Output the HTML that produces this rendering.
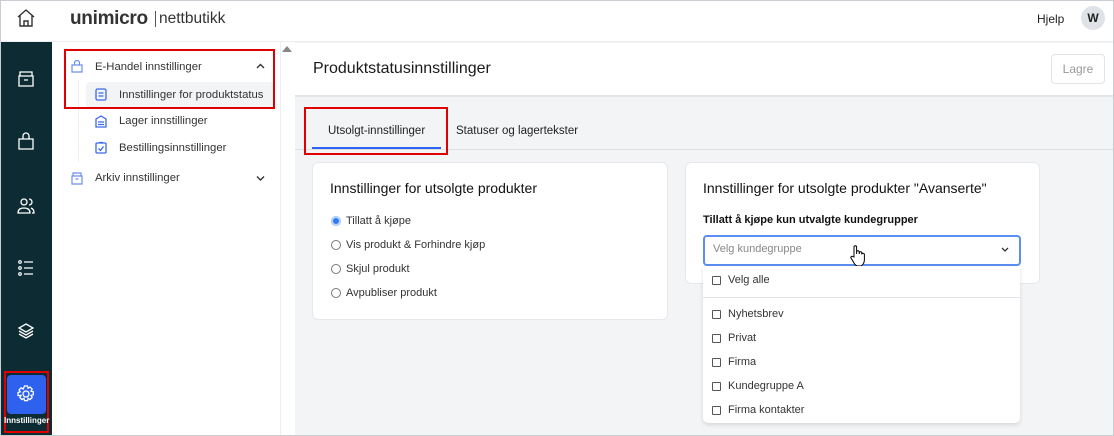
<!DOCTYPE html>
<html><head><meta charset="utf-8"><style>
*{box-sizing:border-box;margin:0;padding:0}
body{width:1114px;height:436px;overflow:hidden;font-family:"Liberation Sans",sans-serif;color:#1f2328;background:#fff;position:relative}
.frame{position:absolute;inset:0;border:1px solid #c9ccd1;pointer-events:none;z-index:50}
.abs{position:absolute}
.hdr{left:0;top:0;width:1114px;height:42px;background:#fff;border-bottom:1px solid #eceef1}
.side{left:1px;top:42px;width:51px;height:394px;background:#0d2b33}
.sub{left:52px;top:42px;width:242px;height:394px;background:#fff;border-right:1px solid #e5e7eb}
.main{left:295px;top:42px;width:818px;height:394px;background:#f3f4f6}
.tbar{left:295px;top:43px;width:818px;height:54px;background:#fff;border-bottom:2px solid #e2e4e8}
.t13{font-size:11.3px}
.card{background:#fff;border:1px solid #e6e8eb;border-radius:6px}
.radio{width:10px;height:10px;border:1px solid #777;border-radius:50%;display:inline-block}
.cb{width:9px;height:9px;border:1px solid #555;border-radius:1px}
.item{font-size:11px;color:#333}
svg{display:block}
</style></head><body>
<div class="abs hdr"></div>
<svg class="abs" style="left:16px;top:8px" width="20" height="20" viewBox="0 0 20 20" fill="none" stroke="#333" stroke-width="1.4"><path d="M2 9L10 2l8 7M4 7.5V18h12V7.5M8 18v-5h4v5"/></svg>
<div class="abs" style="left:70px;top:8px;font-size:19px;font-weight:bold;color:#333;letter-spacing:-0.3px">unimicro</div>
<div class="abs" style="left:155px;top:11px;width:1px;height:16px;background:#555"></div>
<div class="abs" style="left:159px;top:10px;font-size:15.5px;color:#333">nettbutikk</div>
<div class="abs" style="left:1037px;top:12px;font-size:12px;color:#222">Hjelp</div>
<div class="abs" style="left:1081px;top:6px;width:24px;height:24px;border-radius:50%;background:#dfe3e7;font-size:12px;font-weight:bold;text-align:center;line-height:24px;color:#222">W</div>

<div class="abs side"></div>
<svg class="abs" style="left:16px;top:69px" width="20" height="20" viewBox="0 0 20 20" fill="none" stroke="#fff" stroke-width="1.3"><path d="M4 3h12v4H4zM3 7h14v10H3zM8 11h4"/></svg>
<svg class="abs" style="left:16px;top:131px" width="20" height="20" viewBox="0 0 20 20" fill="none" stroke="#fff" stroke-width="1.3"><path d="M3 8h14v10H3zM7 8V5a3 3 0 0 1 6 0v3"/></svg>
<svg class="abs" style="left:16px;top:196px" width="20" height="20" viewBox="0 0 20 20" fill="none" stroke="#fff" stroke-width="1.3"><circle cx="8" cy="6" r="3"/><path d="M2 17c0-4 3-5 6-5s6 1 6 5zM13 3a3 3 0 0 1 0 6M15 12c2 1 3 2 3 5h-2"/></svg>
<svg class="abs" style="left:16px;top:258px" width="20" height="20" viewBox="0 0 20 20" fill="none" stroke="#fff" stroke-width="1.2"><circle cx="4" cy="4" r="1.3"/><circle cx="4" cy="10" r="1.3"/><circle cx="4" cy="16" r="1.3"/><path d="M8 4h9M8 10h9M8 16h9"/></svg>
<svg class="abs" style="left:16px;top:321px" width="20" height="20" viewBox="0 0 20 20" fill="none" stroke="#fff" stroke-width="1.3"><path d="M10 3l7 4-7 4-7-4zM3 10l7 4 7-4M3 13l7 4 7-4"/></svg>
<div class="abs" style="left:4px;top:371px;width:45px;height:62px;border:2px solid #e00000"></div>
<div class="abs" style="left:7px;top:375px;width:39px;height:39px;background:#2e62ee;border-radius:4px"></div>
<svg class="abs" style="left:16px;top:384px" width="20" height="20" viewBox="0 0 20 20" fill="none" stroke="#fff" stroke-width="1.3"><circle cx="10" cy="10" r="3"/><path d="M8.5 2h3l.6 2.3 2-1.2 2.1 2.1-1.2 2 2.3.6v3l-2.3.6 1.2 2-2.1 2.1-2-1.2-.6 2.3h-3l-.6-2.3-2 1.2-2.1-2.1 1.2-2L2 11.5v-3l2.3-.6-1.2-2 2.1-2.1 2 1.2z"/></svg>
<div class="abs" style="left:4px;top:416px;width:45px;text-align:center;font-size:8px;font-weight:bold;color:#fff">Innstillinger</div>

<div class="abs sub"></div>
<div class="abs" style="left:280px;top:42px;width:14px;height:394px;background:#fff;border-left:1px solid #eee"></div>
<div class="abs" style="left:282px;top:46px;width:0;height:0;border-left:5px solid transparent;border-right:5px solid transparent;border-bottom:6px solid #888"></div>
<div class="abs" style="left:78px;top:80px;width:1px;height:82px;background:#eee"></div>
<div class="abs" style="left:86px;top:82px;width:188px;height:26px;background:#f3f4f6;border-radius:4px"></div>
<div class="abs" style="left:64px;top:49px;width:211px;height:60px;border:2px solid #e00000"></div>
<svg class="abs" style="left:71px;top:60px" width="12" height="13" viewBox="0 0 12 13" fill="none" stroke="#6a8ff0" stroke-width="1.2"><path d="M1 5h10v7H1zM3.5 5V3a2.5 2.5 0 0 1 5 0v2"/></svg>
<div class="abs t13" style="left:95px;top:61px;color:#333">E-Handel innstillinger</div>
<svg class="abs" style="left:256px;top:63px" width="9" height="6" viewBox="0 0 9 6" fill="none" stroke="#333" stroke-width="1.4"><path d="M1 5l3.5-3.5L8 5"/></svg>
<svg class="abs" style="left:95px;top:88px" width="12" height="13" viewBox="0 0 12 13" fill="none" stroke="#3b68e8" stroke-width="1.3"><rect x="1" y="1" width="10" height="11" rx="1.5"/><path d="M3.5 5h5M3.5 8h5"/></svg>
<div class="abs t13" style="left:119px;top:89px;color:#333">Innstillinger for produktstatus</div>
<svg class="abs" style="left:95px;top:115px" width="12" height="13" viewBox="0 0 12 13" fill="none" stroke="#3b68e8" stroke-width="1.3"><path d="M1 4l5-3 5 3v8H1zM3 7h6M3 9.5h6"/></svg>
<div class="abs t13" style="left:119px;top:115px;color:#333">Lager innstillinger</div>
<svg class="abs" style="left:95px;top:141px" width="12" height="13" viewBox="0 0 12 13" fill="none" stroke="#3b68e8" stroke-width="1.3"><rect x="1" y="2" width="10" height="10" rx="1"/><path d="M4 1.5h4M3.5 7.5l2 2 3-4"/></svg>
<div class="abs t13" style="left:119px;top:142px;color:#333">Bestillingsinnstillinger</div>
<svg class="abs" style="left:71px;top:172px" width="12" height="13" viewBox="0 0 12 13" fill="none" stroke="#6a8ff0" stroke-width="1.2"><path d="M2 1h8v3H2zM1 4h10v8H1zM4.5 7h3"/></svg>
<div class="abs t13" style="left:95px;top:172px;color:#333">Arkiv innstillinger</div>
<svg class="abs" style="left:256px;top:175px" width="9" height="6" viewBox="0 0 9 6" fill="none" stroke="#333" stroke-width="1.4"><path d="M1 1.5L4.5 5 8 1.5"/></svg>

<div class="abs main"></div>
<div class="abs tbar"></div>
<div class="abs" style="left:313px;top:60px;font-size:16px;color:#1a1a1a">Produktstatusinnstillinger</div>
<div class="abs" style="left:1051px;top:54px;width:54px;height:30px;border:1px solid #e2e4e8;border-radius:4px;font-size:12px;color:#999;text-align:center;line-height:28px;background:#fff">Lagre</div>
<div class="abs" style="left:295px;top:149px;width:818px;height:1px;background:#dde0e4"></div>
<div class="abs" style="left:312px;top:147px;width:129px;height:2px;background:#2e62ee"></div>
<div class="abs" style="left:304px;top:107px;width:144px;height:48px;border:2px solid #e00000"></div>
<div class="abs" style="left:328px;top:125px;font-size:11.5px;color:#222">Utsolgt-innstillinger</div>
<div class="abs" style="left:456px;top:125px;font-size:11.5px;color:#222">Statuser og lagertekster</div>

<div class="abs card" style="left:312px;top:162px;width:356px;height:158px"></div>
<div class="abs" style="left:330px;top:180px;font-size:14px;color:#111">Innstillinger for utsolgte produkter</div>
<div class="abs" style="left:331px;top:216px;width:10px;height:10px;border-radius:50%;background:#2e7cf6;box-shadow:inset 0 0 0 2px #bcd3fb"></div>
<div class="abs item" style="left:346px;top:215px">Tillatt å kjøpe</div>
<span class="abs radio" style="left:331px;top:240px"></span><div class="abs item" style="left:346px;top:239px">Vis produkt &amp; Forhindre kjøp</div>
<span class="abs radio" style="left:331px;top:264px"></span><div class="abs item" style="left:346px;top:263px">Skjul produkt</div>
<span class="abs radio" style="left:331px;top:288px"></span><div class="abs item" style="left:346px;top:287px">Avpubliser produkt</div>

<div class="abs card" style="left:685px;top:162px;width:355px;height:122px"></div>
<div class="abs" style="left:703px;top:180px;font-size:14px;color:#111">Innstillinger for utsolgte produkter "Avanserte"</div>
<div class="abs" style="left:703px;top:214px;font-size:11px;font-weight:bold;color:#111">Tillatt å kjøpe kun utvalgte kundegrupper</div>
<div class="abs" style="left:703px;top:235px;width:318px;height:31px;border:2px solid #5b8ef0;border-radius:4px;background:#fff"></div>
<div class="abs item" style="left:713px;top:243px;color:#888">Velg kundegruppe</div>
<svg class="abs" style="left:1001px;top:247px" width="8" height="5" viewBox="0 0 8 5" fill="none" stroke="#333" stroke-width="1.3"><path d="M1 1l3 3 3-3"/></svg>
<svg class="abs" style="left:849px;top:244px" width="18" height="24" viewBox="0 0 18 24" fill="#fff" stroke="#000" stroke-width="1"><path d="M5 13V3a1.3 1.3 0 0 1 2.6 0v7V8a1.3 1.3 0 0 1 2.6 0v2-1a1.3 1.3 0 0 1 2.6 0v1.5a1.3 1.3 0 0 1 2.6 0V16c0 3-2 6-5 6H9c-2 0-3-1-4-3l-3-5a1.2 1.2 0 0 1 2-1.3z"/></svg>
<div class="abs" style="left:703px;top:266px;width:317px;height:157px;background:#fff;border-radius:0 0 5px 5px;box-shadow:0 2px 4px rgba(0,0,0,.12)"></div>
<div class="abs" style="left:703px;top:297px;width:317px;height:1px;background:#e3e5e8"></div>
<div class="abs cb" style="left:712px;top:276px"></div><div class="abs item" style="left:728px;top:274px">Velg alle</div>
<div class="abs cb" style="left:712px;top:310px"></div><div class="abs item" style="left:728px;top:308px">Nyhetsbrev</div>
<div class="abs cb" style="left:712px;top:334px"></div><div class="abs item" style="left:728px;top:332px">Privat</div>
<div class="abs cb" style="left:712px;top:358px"></div><div class="abs item" style="left:728px;top:356px">Firma</div>
<div class="abs cb" style="left:712px;top:382px"></div><div class="abs item" style="left:728px;top:380px">Kundegruppe A</div>
<div class="abs cb" style="left:712px;top:406px"></div><div class="abs item" style="left:728px;top:404px">Firma kontakter</div>
<div class="frame"></div>
</body></html>
